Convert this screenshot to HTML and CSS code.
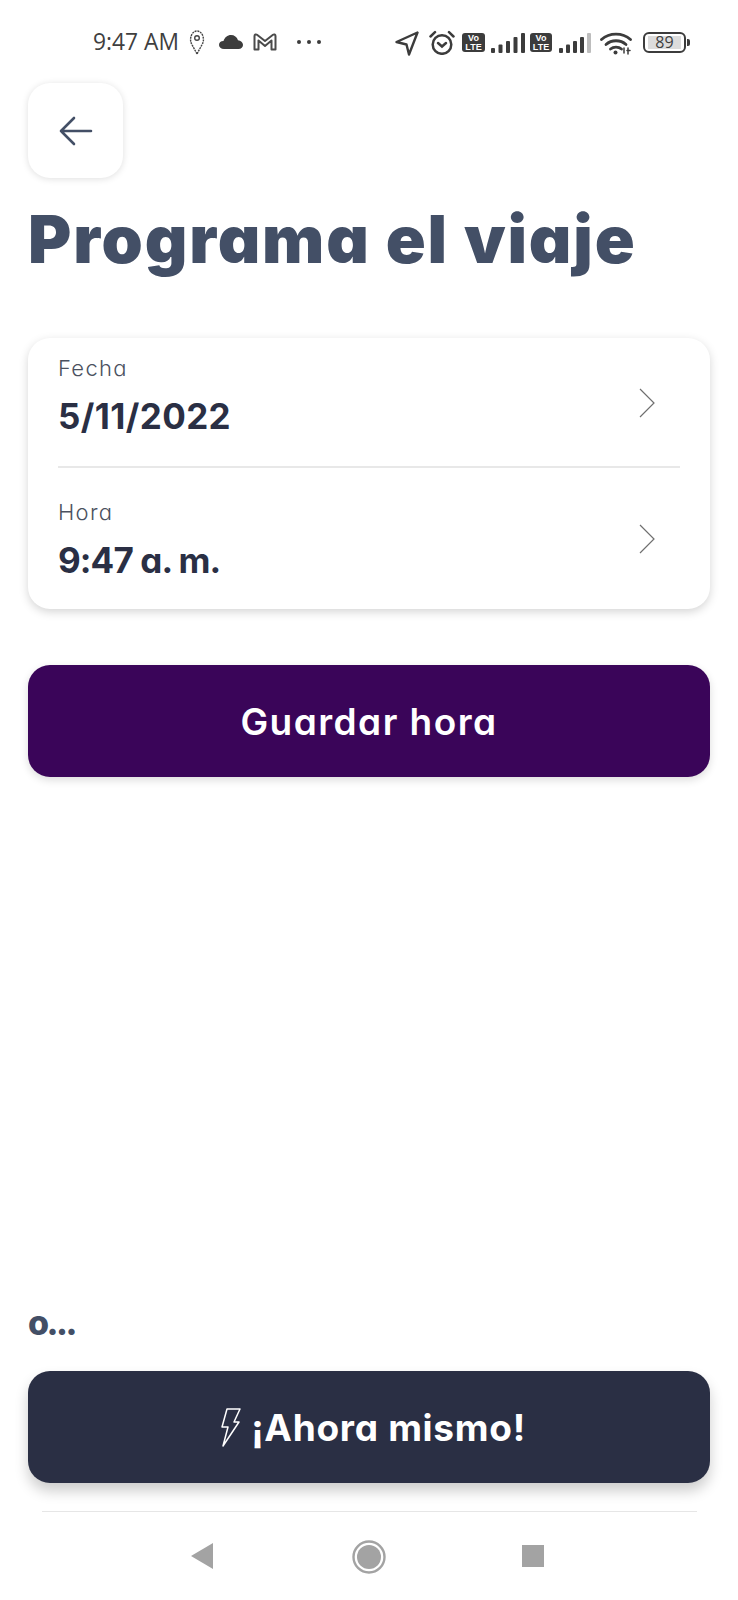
FILE: index.html
```html
<!DOCTYPE html>
<html lang="es">
<head>
<meta charset="utf-8">
<title>Programa el viaje</title>
<link rel="stylesheet" href="styles.css">
</head>
<body>
<div class="page">
  <header class="status">
    <div class="status-left">
      <span class="time">9:47 AM</span>
      <svg class="i-pin" width="16" height="25" viewBox="0 0 16 25" fill="none" stroke="#444" stroke-width="1.4" stroke-dasharray="2 .8"><path d="M8 24 2.4 13.5C.2 9 2.5 1 8 1s7.800 8 5.600 12.500z"/><circle cx="8" cy="8" r="2.300" stroke-dasharray="none"/></svg>
      <svg class="i-cloud" width="24" height="14" viewBox="0 0 24 14" fill="#3c3c3c"><path d="M5 14C2 14 0 12.200 0 10c0-2.300 2-4 4.500-3.900C5.500 2.500 8.500 0 12 0c3.300 0 6 2 7 5.200 2.700.2 5 2.200 5 4.800 0 2.200-1.800 4-4.500 4z"/></svg>
      <svg class="i-m" width="24" height="18" viewBox="0 0 24 18" fill="none" stroke="#4a4a4a" stroke-width="2" stroke-linejoin="round"><path d="M1.500 16.500V3c0-1.500 1.500-2 2.500-1.200L12 8l8-6.200c1-.8 2.500-.3 2.500 1.200v13.500h-4V7.500L12 13 5.500 7.500v9z"/></svg>
      <svg class="i-dots" width="24" height="4" viewBox="0 0 24 4" fill="#3c3c3c"><circle cx="2" cy="2" r="2"/><circle cx="12" cy="2" r="2"/><circle cx="22" cy="2" r="2"/></svg>
    </div>
    <div class="status-right">
      <svg class="i-nav" width="24" height="25" viewBox="0 0 24 25" fill="none" stroke="#3c3c3c" stroke-width="2.400" stroke-linejoin="round"><path d="M22.500 1.500 1.500 11l10 2.500 2.500 10z"/></svg>
      <svg class="i-alarm" width="26" height="25" viewBox="0 0 26 25" fill="none" stroke="#3c3c3c" stroke-width="2.500" stroke-linecap="round"><circle cx="13" cy="14.500" r="9.300"/><path d="M1.500 6.500 6 2.200M24.500 6.500 20 2.200"/><path d="m9 13 4 3.500 4-3.500"/></svg>
      <span class="volte"><span>Vo</span><span>LTE</span></span>
      <svg class="i-signal" width="34" height="20" viewBox="0 0 34 20" fill="#3c3c3c"><rect x="0" y="15" width="4" height="5" rx="1"/><rect x="7.500" y="11.500" width="4" height="8.500" rx="1"/><rect x="15" y="8" width="4" height="12" rx="1"/><rect x="22.500" y="4" width="4" height="16" rx="1"/><rect x="30" y="0" width="4" height="20" rx="1"/></svg>
      <span class="volte volte-two"><span>Vo</span><span>LTE</span></span>
      <svg class="i-signal i-signal-two" width="32" height="20" viewBox="0 0 32 20" fill="#3c3c3c"><rect x="0" y="15" width="4" height="5" rx="1"/><rect x="7" y="11.500" width="4" height="8.500" rx="1"/><rect x="14" y="8" width="4" height="12" rx="1"/><rect x="21" y="4" width="4" height="16" rx="1"/><rect x="28" y="0" width="4" height="20" rx="1" fill="#bdbdbd"/></svg>
      <svg class="i-wifi" width="32" height="23" viewBox="0 0 32 23" fill="none" stroke="#3c3c3c" stroke-width="2.800" stroke-linecap="round"><path d="M1.500 7.500C9.500.2 22.500.2 30.500 7.500"/><path d="M6 12.500c5.500-5 14.500-5 20 0"/><path d="M10.500 17c3-2.500 8-2.500 11 0"/><circle cx="15.500" cy="20.500" r="2" fill="#3c3c3c" stroke="none"/><path d="M24 16v5M27 18.500l3 0M28 16v6" stroke-width="1.500"/></svg>
      <span class="battery"><span class="battery-fill">89</span></span>
      <span class="battery-tip"></span>
    </div>
  </header>

  <main class="content">
    <button class="back" type="button" aria-label="Volver">
      <svg width="34" height="30" viewBox="0 0 34 30" fill="none" stroke="#434f66" stroke-width="2.600" stroke-linecap="round" stroke-linejoin="round"><path d="M32 15H2M15 2 2 15l13 13"/></svg>
    </button>
    <h1 class="title">Programa el viaje</h1>

    <section class="card">
      <div class="row row-date">
        <div class="row-text">
          <div class="label">Fecha</div>
          <div class="value">5/11/2022</div>
        </div>
        <svg class="chev" width="16" height="30" viewBox="0 0 16 30" fill="none" stroke="#6f6f6f" stroke-width="1.200"><path d="m1 1 14 14L1 29"/></svg>
      </div>
      <div class="divider"></div>
      <div class="row row-time">
        <div class="row-text">
          <div class="label">Hora</div>
          <div class="value">9:47 a. m.</div>
        </div>
        <svg class="chev" width="16" height="30" viewBox="0 0 16 30" fill="none" stroke="#6f6f6f" stroke-width="1.200"><path d="m1 1 14 14L1 29"/></svg>
      </div>
    </section>

    <button class="cta cta-save" type="button">Guardar hora</button>

    <div class="spacer"></div>

    <p class="or">o...</p>
    <button class="cta cta-now" type="button">
      <svg class="bolt" width="20" height="39" viewBox="0 0 20 39" fill="none" stroke="#fff" stroke-width="1.500" stroke-linejoin="round"><path d="M6 1h13l-6 13h5L2 38l5-19H1z"/></svg>
      <span>¡Ahora mismo!</span>
    </button>
  </main>

  <nav class="navbar">
    <svg width="22" height="26" viewBox="0 0 22 26" fill="#a3a3a3"><path d="M22 0v26L0 13z"/></svg>
    <svg class="nav-home" width="34" height="34" viewBox="0 0 34 34"><circle cx="17" cy="17" r="15.500" fill="none" stroke="#a3a3a3" stroke-width="2.400"/><circle cx="17" cy="17" r="12" fill="#a3a3a3"/></svg>
    <span class="nav-square"></span>
  </nav>
</div>
</body>
</html>
```
FILE: styles.css
```css
* { box-sizing: border-box; }
html, body { margin: 0; padding: 0; background: #fff; }
.page {
  width: 738px;
  height: 1600px;
  display: flex;
  flex-direction: column;
  overflow: hidden;
  font-family: Inter, "Liberation Sans", sans-serif;
  font-feature-settings: "cv11" 1;
}

.status {
  height: 83px;
  flex: none;
  padding: 31px 48px 0 93px;
  display: flex;
  justify-content: space-between;
  align-items: flex-start;
  color: #3f3f3f;
}
.status-left, .status-right { display: flex; align-items: flex-start; }
.time {
  font: 500 22.8px/24px "Open Sans", sans-serif;
  width: 96px;
  margin-top: -1px;
  white-space: nowrap;
}
.i-pin { margin-top: -1px; }
.i-cloud { margin: 4px 0 0 14px; }
.i-m { margin: 2px 0 0 10px; }
.i-dots { margin: 9px 0 0 20px; }
.i-nav { margin-right: 10px; }
.i-alarm { margin: -1px 7px 0 0; }
.volte {
  width: 23px;
  height: 19px;
  margin: 2px 6px 0 0;
  background: #3c3c3c;
  border-radius: 3px;
  color: #fff;
  font: 700 9px/9px "Liberation Sans", sans-serif;
  display: flex;
  flex-direction: column;
  align-items: center;
  justify-content: center;
  font-feature-settings: normal;
}
.i-signal { margin: 2px 5px 0 0; }
.volte-two { width: 22px; }
.i-signal-two { margin-left: 1px; margin-right: 9px; }
.i-wifi { margin: 1px 11px 0 0; }
.battery {
  width: 43px;
  height: 21px;
  margin-top: 1px;
  border: 2.500px solid #3c3c3c;
  border-radius: 6px;
  padding: 2px 3px;
  display: flex;
}
.battery-fill {
  flex: 1;
  background: #dcdcdc;
  color: #3f3f3f;
  font: 400 16px/12px "Open Sans", sans-serif;
  text-align: center;
}
.battery-tip {
  width: 3px;
  height: 7px;
  margin: 8px 0 0 1px;
  background: #3c3c3c;
  border-radius: 0 2px 2px 0;
}

.content {
  flex: 1;
  padding: 0 28px;
  display: flex;
  flex-direction: column;
  align-items: stretch;
}
.back {
  width: 95px;
  height: 95px;
  padding: 0;
  border: 0;
  border-radius: 22px;
  background: #fff;
  box-shadow: 0 1px 7px rgba(0, 0, 0, .13);
  display: flex;
  align-items: center;
  justify-content: center;
}
.title {
  margin: 21px 0 0;
  font-size: 66px;
  line-height: 80px;
  font-weight: 900;
  letter-spacing: 1.850px;
  color: #434f66;
  white-space: nowrap;
}

.card {
  margin-top: 59px;
  height: 271px;
  background: #fff;
  border-radius: 22px;
  box-shadow: 0 3px 10px rgba(0, 0, 0, .17);
  padding: 0 30px;
  display: flex;
  flex-direction: column;
}
.row { display: flex; justify-content: space-between; align-items: flex-start; }
.row-date { height: 128px; padding-top: 16px; }
.row-time { flex: 1; padding-top: 30px; }
.row .chev { flex: none; margin-right: 25px; }
.row-date .chev { margin-top: 34px; }
.row-time .chev { margin-top: 26px; }
.label {
  font-size: 22px;
  line-height: 28px;
  font-weight: 300;
  letter-spacing: 1.300px;
  color: #4b5160;
}
.value {
  margin-top: 12px;
  font-size: 35px;
  line-height: 44px;
  font-weight: 700;
  letter-spacing: .4px;
  color: #2a2f44;
}
.row-time .value { letter-spacing: -.9px; }
.divider { height: 2px; background: #e8e8e8; flex: none; }

.cta {
  flex: none;
  height: 112px;
  width: 100%;
  border: 0;
  border-radius: 22px;
  color: #fff;
  font-family: inherit;
  font-feature-settings: inherit;
  font-size: 37px;
  font-weight: 600;
  display: flex;
  align-items: center;
  justify-content: center;
}
.cta-save {
  margin-top: 56px;
  background: #3a0559;
  box-shadow: 0 3px 8px rgba(0, 0, 0, .14);
  letter-spacing: 1.450px;
}
.cta-now {
  background: #2a2f44;
  box-shadow: 0 8px 14px rgba(0, 0, 0, .2);
  gap: 10px;
  padding-left: 15px;
  font-weight: 700;
  letter-spacing: .7px;
}
.spacer { flex: 1; }
.or {
  margin: 0 0 28px;
  font-size: 34px;
  line-height: 40px;
  font-weight: 800;
  letter-spacing: -2.500px;
  color: #434f66;
}

.navbar {
  flex: none;
  height: 89px;
  margin: 28px 41px 0 42px;
  border-top: 1px solid #e6e6e6;
  padding: 31px 153px 0 149px;
  display: flex;
  justify-content: space-between;
  align-items: flex-start;
}
.nav-home { margin: -3px 0 0 2px; }
.nav-square {
  width: 22px;
  height: 22px;
  background: #a3a3a3;
  margin-top: 2px;
}
```
